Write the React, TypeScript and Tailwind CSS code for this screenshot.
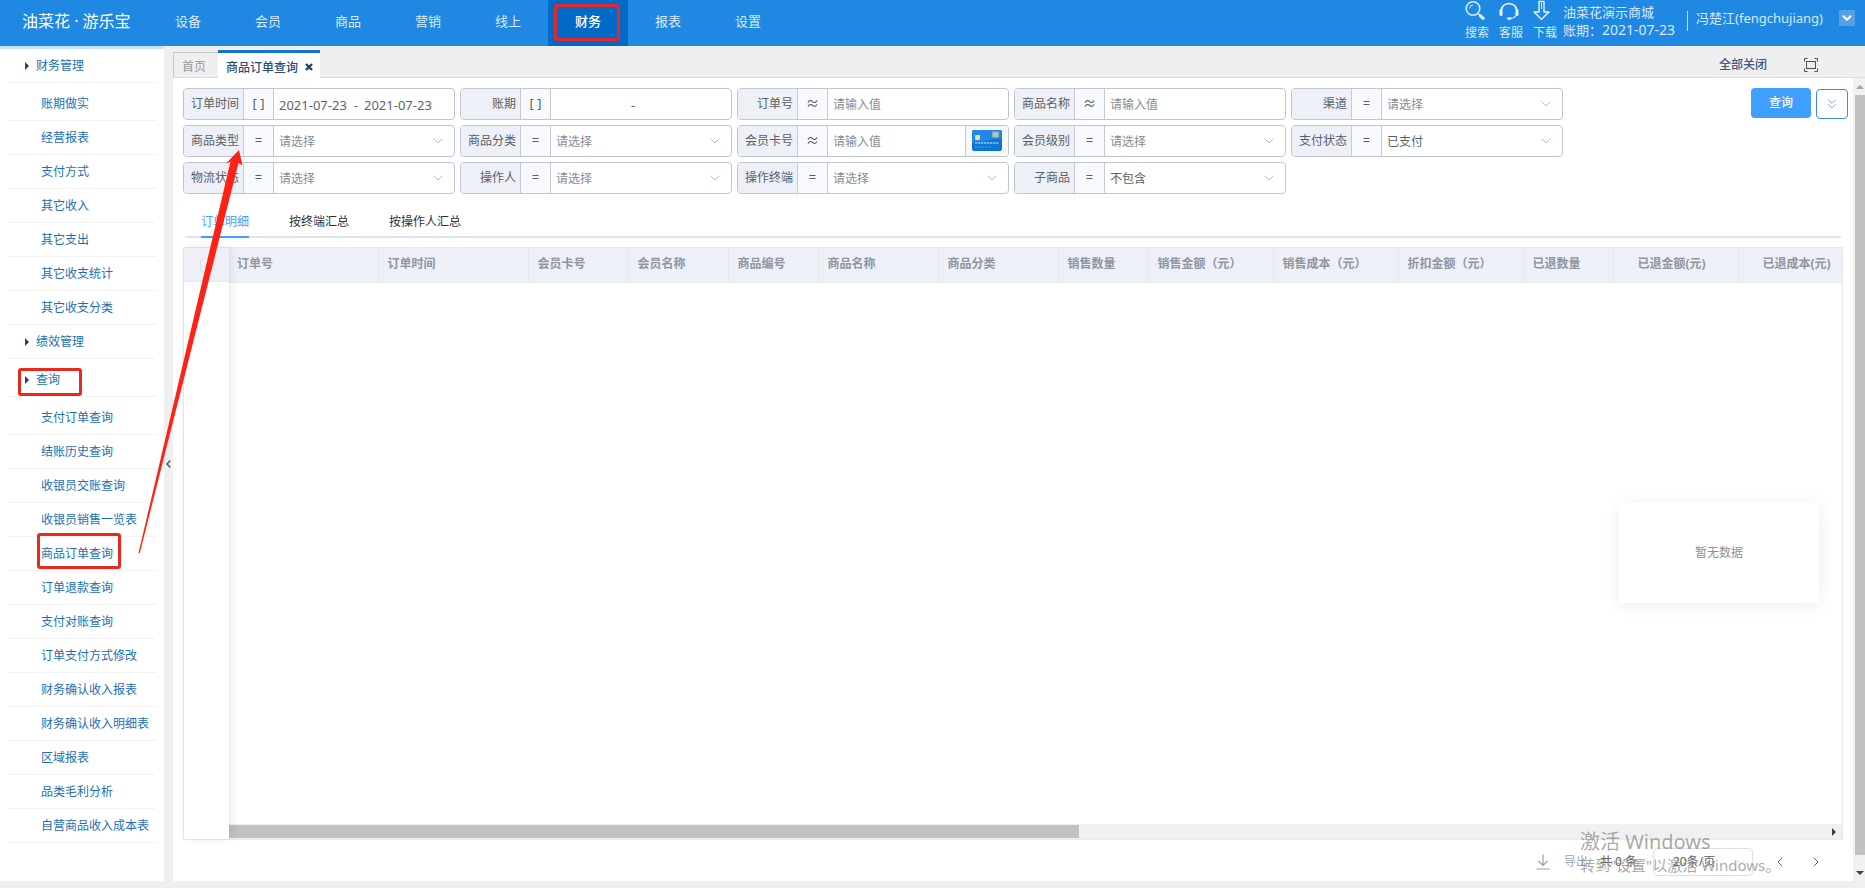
import { useState } from 'react';
import type { ReactNode } from 'react';
import { ChevronDown, ChevronLeft, ChevronRight, ChevronsDown } from 'lucide-react';

const NAV = ['设备', '会员', '商品', '营销', '线上', '财务', '报表', '设置'];

type MenuRow = { label: string; group?: boolean; tall?: boolean };

const MENU: MenuRow[] = [
  { label: '财务管理', group: true },
  { label: '账期做实', tall: true },
  { label: '经营报表' },
  { label: '支付方式' },
  { label: '其它收入' },
  { label: '其它支出' },
  { label: '其它收支统计' },
  { label: '其它收支分类' },
  { label: '绩效管理', group: true },
  { label: '查询', group: true, tall: true },
  { label: '支付订单查询', tall: true },
  { label: '结账历史查询' },
  { label: '收银员交账查询' },
  { label: '收银员销售一览表' },
  { label: '商品订单查询' },
  { label: '订单退款查询' },
  { label: '支付对账查询' },
  { label: '订单支付方式修改' },
  { label: '财务确认收入报表' },
  { label: '财务确认收入明细表' },
  { label: '区域报表' },
  { label: '品类毛利分析' },
  { label: '自营商品收入成本表' },
];

type FilterKind = 'range' | 'text' | 'card' | 'select';
type Filter = { id: string; label: string; op: string; kind: FilterKind; value?: string; end?: string };

const FILTERS: Filter[] = [
  { id: 'order-time', label: '订单时间', op: '[ ]', kind: 'range', value: '2021-07-23', end: '2021-07-23' },
  { id: 'period', label: '账期', op: '[ ]', kind: 'range' },
  { id: 'order-no', label: '订单号', op: '≈', kind: 'text' },
  { id: 'goods-name', label: '商品名称', op: '≈', kind: 'text' },
  { id: 'channel', label: '渠道', op: '=', kind: 'select' },
  { id: 'goods-type', label: '商品类型', op: '=', kind: 'select' },
  { id: 'goods-category', label: '商品分类', op: '=', kind: 'select' },
  { id: 'card-no', label: '会员卡号', op: '≈', kind: 'card' },
  { id: 'member-level', label: '会员级别', op: '=', kind: 'select' },
  { id: 'pay-status', label: '支付状态', op: '=', kind: 'select', value: '已支付' },
  { id: 'logistics', label: '物流状态', op: '=', kind: 'select' },
  { id: 'operator', label: '操作人', op: '=', kind: 'select' },
  { id: 'terminal', label: '操作终端', op: '=', kind: 'select' },
  { id: 'sub-goods', label: '子商品', op: '=', kind: 'select', value: '不包含' },
];

const COLUMNS: { label: string; width: number; centered?: boolean }[] = [
  { label: '订单号', width: 150 },
  { label: '订单时间', width: 150 },
  { label: '会员卡号', width: 100 },
  { label: '会员名称', width: 100 },
  { label: '商品编号', width: 90 },
  { label: '商品名称', width: 120 },
  { label: '商品分类', width: 120 },
  { label: '销售数量', width: 90 },
  { label: '销售金额（元）', width: 125 },
  { label: '销售成本（元）', width: 125 },
  { label: '折扣金额（元）', width: 125 },
  { label: '已退数量', width: 90 },
  { label: '已退金额(元)', width: 125, centered: true },
  { label: '已退成本(元)', width: 125, centered: true },
];

function SearchIcon() {
  return (
    <svg width="20" height="20" viewBox="0 0 20 20" fill="none" stroke="#d9ecfb">
      <circle cx="8" cy="8.500" r="6.8" strokeWidth="1.6" />
      <path d="M4.500 8.500a3.500 3.500 0 0 1 3.500-3.500" strokeWidth="1" />
      <path d="M13 13.500l2 2" strokeWidth="1.4" />
      <path d="M15.500 15.800l2.600 2.600" strokeWidth="3.2" strokeLinecap="round" />
    </svg>
  );
}

function HeadsetIcon() {
  return (
    <svg width="20" height="20" viewBox="0 0 20 20" fill="none" stroke="#e6f3fd" strokeLinecap="round">
      <path d="M2.500 9.500a7.600 7 0 0 1 15 0" strokeWidth="1.8" />
      <path d="M2 10.500v4M18 10.500v4" strokeWidth="3" />
      <path d="M16.500 16c-1 1.600-2.600 2.500-5 2.700" strokeWidth="1.3" />
      <path d="M9.300 18.500h2" strokeWidth="2.600" />
    </svg>
  );
}

function ArrowDownIcon() {
  return (
    <svg width="20" height="20" viewBox="0 0 20 20" fill="none" stroke="#e6f3fd" strokeWidth="1.4" strokeLinejoin="round">
      <path d="M6 1.500h5v10.500h5L8.500 19.200 1 12h5z" />
      <path d="M8.500 3v6" strokeWidth="1" />
    </svg>
  );
}

function BankCardIcon() {
  return (
    <svg width="30" height="21" viewBox="0 0 30 21">
      <rect width="30" height="21" rx="2" fill="#0c76d4" />
      <path d="M0 2a2 2 0 0 1 2-2h26a2 2 0 0 1 2 2v6L0 13z" fill="#2089e4" />
      <rect x="3" y="5" width="5" height="5" rx="1" fill="#e9d9a0" />
      <rect x="20" y="1.5" width="7" height="6" rx="1" fill="#8fb3c4" />
      <path d="M21.5 4h4M21.5 6h4" stroke="#d9dfc0" strokeWidth="1" />
      <path d="M3 13h24" stroke="#8cc4f4" strokeWidth="1.6" strokeDasharray="2.4 .6" />
      <path d="M3 17h16" stroke="#5aa9ea" strokeWidth="1.2" strokeDasharray="2 1.4" />
    </svg>
  );
}

function FullscreenIcon() {
  return (
    <svg width="14" height="14" viewBox="0 0 14 14" fill="none" stroke="#4a4f59" strokeWidth="1">
      <rect x="2.5" y="3.5" width="9" height="7" />
      <path d="M.5 3.5v-3h3M10.500 .5h3v3M13.500 10.500v3h-3M3.500 13.500h-3v-3" />
    </svg>
  );
}

function DownloadIcon() {
  return (
    <svg width="14" height="16" viewBox="0 0 14 16" fill="none" stroke="#9aa0ae" strokeWidth="1.2">
      <path d="M7 .5v11M2.500 7L7 11.500 11.500 7M.5 15h13" />
    </svg>
  );
}

function ToolButton({ icon, label }: { icon: ReactNode; label: string }) {
  return (
    <button type="button" className="flex w-[34px] flex-col items-start text-xs leading-4 text-[#d5e9fa]">
      {icon}
      <span className="mt-[5px]">{label}</span>
    </button>
  );
}

function Header() {
  return (
    <header className="flex h-[46px] shrink-0 bg-[#1e88e2]">
      <h1 className="w-[148px] shrink-0 pl-[22px] text-base leading-[42px] whitespace-nowrap text-white">油菜花 · 游乐宝</h1>
      <nav className="flex">
        {NAV.map((label) => (
          <a
            key={label}
            href="#"
            className={
              label === '财务'
                ? 'w-20 bg-[#006ac6] text-center text-[13px] leading-[42px] font-medium text-white'
                : 'w-20 text-center text-[13px] leading-[42px] text-[#d9ebfb]'
            }
          >
            {label}
          </a>
        ))}
      </nav>
      <div className="ml-auto flex items-start">
        <div className="-mr-1 flex">
          <ToolButton icon={<SearchIcon />} label="搜索" />
          <ToolButton icon={<HeadsetIcon />} label="客服" />
          <ToolButton icon={<ArrowDownIcon />} label="下载" />
        </div>
        <div className="pt-[3px] pr-3 text-[13px] leading-[18px] text-[#d5e9fa]">
          <p>油菜花演示商城</p>
          <p>
            账期：<span className="text-sm leading-[18px]">2021-07-23</span>
          </p>
        </div>
        <div className="mt-[11px] h-5 w-px bg-[#c4e0f8]" />
        <p className="pt-[9px] pl-2 text-[13px] leading-[18px] text-[#d5e9fa]">冯楚江(fengchujiang)</p>
        <button
          type="button"
          aria-label="用户菜单"
          className="mt-2.5 mr-2.5 ml-4 flex h-4 w-4 items-center justify-center bg-[#559fe6] text-white"
        >
          <ChevronDown size={14} strokeWidth={3.500} />
        </button>
      </div>
    </header>
  );
}

function Sidebar() {
  return (
    <aside className="w-[164px] shrink-0 border-t-3 border-[#c4e3f6] bg-white px-2">
      {MENU.map(({ label, group, tall }) => (
        <a
          key={label}
          href="#"
          className={`flex items-center border-b border-[#f3f3f3] text-xs whitespace-nowrap text-[#1c6fb5] ${
            tall ? 'h-[38px] pt-1' : 'h-[34px]'
          } ${group ? 'pl-[17px]' : 'pl-[33px]'}`}
        >
          {group && (
            <svg width="4" height="8" viewBox="0 0 4 8" className="mr-[7px]" fill="#1d4468">
              <path d="M0 0l4 4-4 4z" />
            </svg>
          )}
          {label}
        </a>
      ))}
    </aside>
  );
}

function Field({ filter }: { filter: Filter }) {
  const { id, label, op, kind, value, end } = filter;
  return (
    <div className="flex h-8 overflow-hidden rounded border border-[#bfc6cf] text-xs">
      <label
        htmlFor={id}
        className="flex w-[60px] shrink-0 items-center justify-end border-r border-[#c5cad4] bg-[#edf0f6] pr-1 whitespace-nowrap text-[#5a5e66]"
      >
        {label}
      </label>
      <span className="flex w-[30px] shrink-0 items-center justify-center border-r border-[#c5cad4] bg-[#f8f9fd] text-[13px] text-[#5a5e66]">
        {op}
      </span>
      {kind === 'range' && (
        <div className="flex min-w-0 flex-1 items-center pt-[3px] text-[13px] text-[#5f636b]">
          <input id={id} defaultValue={value} className="w-[78px] pl-[5px] outline-none" />
          <span className="w-2 text-center">-</span>
          <input aria-label={`${label}结束`} defaultValue={end} className="w-[78px] pl-1 outline-none" />
        </div>
      )}
      {(kind === 'text' || kind === 'card') && (
        <input
          id={id}
          placeholder="请输入值"
          className="min-w-0 flex-1 px-[5px] pt-px text-[#5a5e66] outline-none placeholder:text-[#868c98]"
        />
      )}
      {kind === 'card' && (
        <button
          type="button"
          aria-label="读卡"
          className="flex w-[43px] shrink-0 items-center justify-center border-l border-[#c5cad4] bg-[#f5f7fc] pb-0.5"
        >
          <BankCardIcon />
        </button>
      )}
      {kind === 'select' && (
        <div className="relative flex min-w-0 flex-1">
          <select
            id={id}
            className={`w-full appearance-none px-[5px] pt-px outline-none ${value ? 'text-[#5a5e66]' : 'text-[#868c98]'}`}
          >
            <option>{value ?? '请选择'}</option>
          </select>
          <ChevronDown
            size={16}
            strokeWidth={1.500}
            className="pointer-events-none absolute top-[7px] right-2 text-[#b4bccc]"
          />
        </div>
      )}
    </div>
  );
}

function PageTabs() {
  return (
    <div className="flex h-8 shrink-0 items-end border-b border-[#dcdcdc] bg-[#efefef]">
      <button type="button" className="h-[25px] w-[45px] border-t border-l border-[#c9c9c9] pt-1 pr-1 text-xs text-[#999]">
        首页
      </button>
      <button
        type="button"
        className="-mb-px flex h-7 w-[102px] items-center border-t-3 border-[#1277c9] bg-white pt-1 pl-2 text-xs font-medium text-[#2b4b72]"
      >
        商品订单查询
        <svg width="8" height="8" viewBox="0 0 8 8" className="mb-0.5 ml-[7px]" stroke="#1f4468" strokeWidth="2.4">
          <path d="M1 1l6 6M7 1L1 7" />
        </svg>
      </button>
      <button type="button" className="mr-[37px] ml-auto self-center pt-1.5 text-xs font-medium text-[#41587c]">
        全部关闭
      </button>
      <button type="button" aria-label="全屏" className="mr-[47px] self-center pt-1.5">
        <FullscreenIcon />
      </button>
    </div>
  );
}

function SummaryTabs() {
  const [active, setActive] = useState('订单明细');
  return (
    <div className="mt-3.5 mr-0.5 ml-0.5 flex h-[30px] border-b-2 border-[#dfe3ea] pl-4" role="tablist">
      {['订单明细', '按终端汇总', '按操作人汇总'].map((label) => (
        <button
          key={label}
          type="button"
          role="tab"
          aria-selected={label === active}
          onClick={() => setActive(label)}
          className={`-mb-0.5 mr-10 border-b-2 text-xs ${
            label === active ? 'border-[#409eff] text-[#409eff]' : 'border-transparent text-[#303133]'
          }`}
        >
          {label}
        </button>
      ))}
    </div>
  );
}

function OrderTable() {
  return (
    <div className="relative mt-[9px] flex min-h-0 flex-1 border border-[#e6e9f0]">
      <div className="z-10 w-[45px] shrink-0 bg-white shadow-[2px_0_8px_rgba(0,0,0,0.09)]">
        <div className="flex h-[34px] items-center justify-center border-b border-[#e6e9f0] bg-[#edf0f6]">
          <input
            type="checkbox"
            aria-label="全选"
            className="h-3.5 w-3.5 appearance-none rounded-sm border border-[#dde1ea] bg-[#f1f3f8]"
          />
        </div>
      </div>
      <div className="flex min-w-0 flex-1 flex-col overflow-hidden">
        <table className="-ml-px w-[1635px] table-fixed border-collapse">
          <thead>
            <tr className="h-[34px] border-b border-[#e6e9f0] bg-[#edf0f6]">
              {COLUMNS.map(({ label, width, centered }) => (
                <th
                  key={label}
                  style={{ width }}
                  className={`border-r border-[#e4e8f0] pb-0.5 text-xs font-bold whitespace-nowrap text-[#8f95a1] ${
                    centered ? 'pr-2 text-center' : 'pl-[9px] text-left'
                  }`}
                >
                  {label}
                </th>
              ))}
            </tr>
          </thead>
          <tbody />
        </table>
        <div className="mt-auto flex h-[15px] items-center bg-[#f0f0f0]">
          <div className="h-[13px] w-[52.700%] bg-[#c1c1c1]" />
          <svg width="4" height="8" viewBox="0 0 4 8" className="mr-1.5 ml-auto" fill="#404040">
            <path d="M0 0l4 4-4 4z" />
          </svg>
        </div>
      </div>
      <p className="absolute top-[255px] right-[23px] flex h-[100px] w-[200px] items-center justify-center bg-white text-xs text-[#8f8f8f] shadow-[0_2px_16px_rgba(0,0,0,0.08)]">
        暂无数据
      </p>
    </div>
  );
}

function Pager() {
  return (
    <div className="relative flex h-[41px] shrink-0 items-center justify-end pt-0.5 pr-[19px] text-xs text-[#606266]">
      <button type="button" className="flex items-center text-[#a0a5b2]">
        <DownloadIcon />
        <span className="ml-3.5">导出</span>
      </button>
      <span className="ml-3 text-xs whitespace-nowrap">共 0 条</span>
      <div className="relative ml-4">
        <select aria-label="每页条数" className="h-7 w-[100px] appearance-none rounded-sm border border-[#dcdfe6] pl-[19px] text-xs outline-none">
          <option>20条/页</option>
        </select>
        <ChevronDown size={12} strokeWidth={1.500} className="pointer-events-none absolute top-2 right-1.5 text-[#c0c4cc]" />
      </div>
      <button type="button" aria-label="上一页" className="ml-[19px]">
        <ChevronLeft size={16} strokeWidth={1.500} />
      </button>
      <button type="button" aria-label="下一页" className="ml-5">
        <ChevronRight size={16} strokeWidth={1.500} />
      </button>
      <div className="pointer-events-none absolute -top-[9px] right-[68px] w-[195px] text-[#8c8c8c]/75">
        <p className="text-xl leading-[22px]">激活 Windows</p>
        <p className="mt-0.5 text-[15px] leading-5 whitespace-nowrap">转到"设置"以激活 Windows。</p>
      </div>
    </div>
  );
}

function PageScrollbar() {
  return (
    <div className="flex w-3 shrink-0 flex-col items-center bg-[#f1f1f1] pl-0.5">
      <svg width="8" height="4" viewBox="0 0 8 4" className="mt-[7px] mb-1.5" fill="#a3a3a3">
        <path d="M0 4l4-4 4 4z" />
      </svg>
      <div className="w-full flex-1 bg-[#c1c1c1]" />
      <svg width="8" height="4" viewBox="0 0 8 4" className="mt-4 mb-1.5" fill="#404040">
        <path d="M0 0l4 4 4-4z" />
      </svg>
    </div>
  );
}

function Annotations() {
  return (
    <svg
      width="260"
      height="600"
      viewBox="0 0 260 600"
      className="pointer-events-none absolute top-0 left-0 z-20"
      fill="none"
      stroke="#e8291c"
      strokeWidth="3"
    >
      <rect x="19.500" y="369.500" width="61" height="25" rx="1.500" />
      <rect x="38.500" y="534.500" width="81" height="33" rx="1.500" />
      <path d="M138.500 553L230.500 161.500L226 163.500L239 150L242.500 165.500L238.500 163L139.800 553z" fill="#ff2114" stroke="none" />
    </svg>
  );
}

export default function App() {
  return (
    <div
      lang="zh-CN"
      className="relative flex h-screen flex-col overflow-hidden bg-[#efefef] font-['Noto_Sans','Noto_Sans_CJK_SC',sans-serif]"
    >
      <Header />
      <div className="mb-[7px] flex min-h-0 flex-1">
        <Sidebar />
        <button type="button" aria-label="收起菜单" className="flex w-[9px] shrink-0 items-center justify-center bg-[#efefef]">
          <svg width="5" height="8" viewBox="0 0 5 8" fill="none" stroke="#555" strokeWidth="1.500">
            <path d="M4.300 .5L1 4l3.300 3.500" />
          </svg>
        </button>
        <main className="flex min-w-0 flex-1 flex-col">
          <PageTabs />
          <div className="flex min-h-0 flex-1">
            <div className="flex min-w-0 flex-1 flex-col bg-white pt-2.5 pr-2.5 pl-2.5">
              <form className="-mr-[5px] flex items-start" onSubmit={(event) => event.preventDefault()}>
                <div className="grid flex-1 grid-cols-[repeat(auto-fill,272px)] gap-[5px]">
                  {FILTERS.map((filter) => (
                    <Field key={filter.id} filter={filter} />
                  ))}
                </div>
                <button type="submit" className="h-[30px] w-[60px] rounded bg-[#409eff] text-xs font-medium text-white">
                  查询
                </button>
                <button
                  type="button"
                  aria-label="展开条件"
                  className="mt-px ml-[5px] flex h-[30px] w-8 items-center justify-center rounded border border-[#3c8fdc] bg-white text-[#6fa8ee]"
                >
                  <ChevronsDown size={16} strokeWidth={1.500} />
                </button>
              </form>
              <SummaryTabs />
              <OrderTable />
              <Pager />
            </div>
            <PageScrollbar />
          </div>
        </main>
      </div>
      <Annotations />
      <svg
        width="68"
        height="40"
        viewBox="0 0 68 40"
        className="pointer-events-none absolute top-[3px] left-[553px]"
        fill="none"
        stroke="#e0282e"
        strokeWidth="3"
      >
        <rect x="2.500" y="2.500" width="63" height="34" rx="1.500" />
      </svg>
    </div>
  );
}
